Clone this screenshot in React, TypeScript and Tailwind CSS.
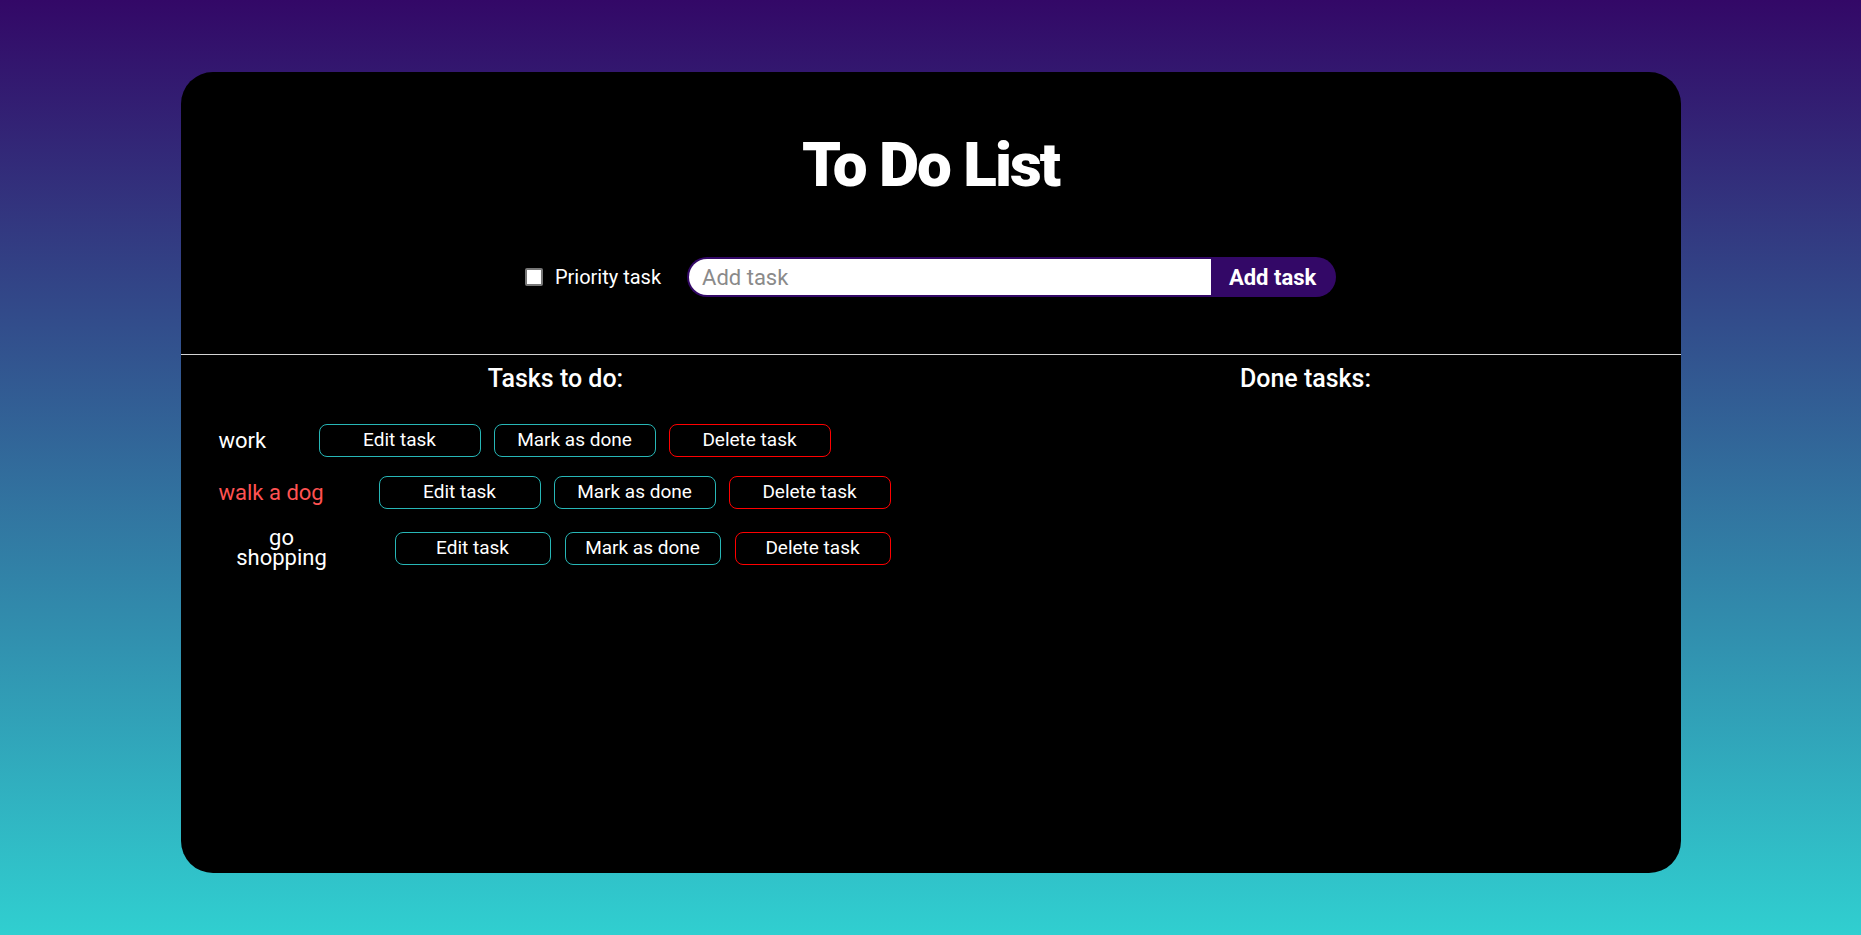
import React from "react";

type Task = {
  name: string;
  labelClass: string;
  btnClass: string;
  gapClass: string;
};

const tasks: Task[] = [
  { name: "work", labelClass: "w-[100px] text-left text-white", btnClass: "w-[162px]", gapClass: "gap-[13px]" },
  { name: "walk a dog", labelClass: "w-[160px] text-left text-[#ff5252]", btnClass: "w-[162px]", gapClass: "gap-[13px]" },
  // this one wraps onto two lines in the original
  {
    name: "go shopping",
    labelClass: "mr-[50px] w-[126px] px-[16px] text-center leading-[20px] text-white",
    btnClass: "w-[156px]",
    gapClass: "gap-[14px]",
  },
];

function TaskRow({ task }: { task: Task }) {
  return (
    <li className="flex items-center">
      <span className={`shrink-0 text-[22px] ${task.labelClass}`}>{task.name}</span>
      <div className={`flex ${task.gapClass}`}>
        <button className={`h-[33px] rounded-[8px] border border-[#27b6b6] bg-black text-[19px] text-white ${task.btnClass}`}>
          Edit task
        </button>
        <button className={`h-[33px] rounded-[8px] border border-[#27b6b6] bg-black text-[19px] text-white ${task.btnClass}`}>
          Mark as done
        </button>
        <button className={`h-[33px] rounded-[8px] border border-[#ff0000] bg-black text-[19px] text-white ${task.btnClass}`}>
          Delete task
        </button>
      </div>
    </li>
  );
}

export default function App() {
  return (
    <div className="h-[935px] overflow-hidden bg-[linear-gradient(to_top,#30cfd0,#330867)] pt-[72px] font-['Roboto','Liberation_Sans',sans-serif]">
      <main className="mx-auto flex h-[801px] w-[1500px] flex-col rounded-[32px] bg-black">
        <h1 className="pt-[62px] text-center text-[62px] font-black leading-[62px] tracking-[-2px] text-white">
          To Do List
        </h1>

        <div className="mt-[61px] flex items-center justify-center">
          <input
            type="checkbox"
            className="h-[18px] w-[18px] appearance-none rounded-[2px] border-2 border-[#767676] bg-white"
          />
          <label className="ml-[12px] text-[20px] text-white">Priority task</label>
          <form className="ml-[26px] flex h-[40px] w-[649px] rounded-full bg-[#330867] p-[2px]">
            <input
              type="text"
              placeholder="Add task"
              className="flex-1 rounded-l-full bg-white pl-[13px] text-[22px] text-black outline-none placeholder:text-[#8a8a8a]"
            />
            <button type="button" className="w-[123px] text-[22px] font-bold text-white">
              Add task
            </button>
          </form>
        </div>

        <div className="mt-[57px] h-px bg-[#d4d4d4]" />

        <div className="grid grid-cols-2">
          <section>
            <h2 className="mt-[9px] text-center text-[25px] font-medium leading-[30px] text-white">Tasks to do:</h2>
            <ul className="mt-[30px] flex flex-col gap-[19px] pl-[38px]">
              {tasks.map((t) => (
                <TaskRow key={t.name} task={t} />
              ))}
            </ul>
          </section>
          <section>
            <h2 className="mt-[9px] text-center text-[25px] font-medium leading-[30px] text-white">Done tasks:</h2>
          </section>
        </div>
      </main>
    </div>
  );
}
